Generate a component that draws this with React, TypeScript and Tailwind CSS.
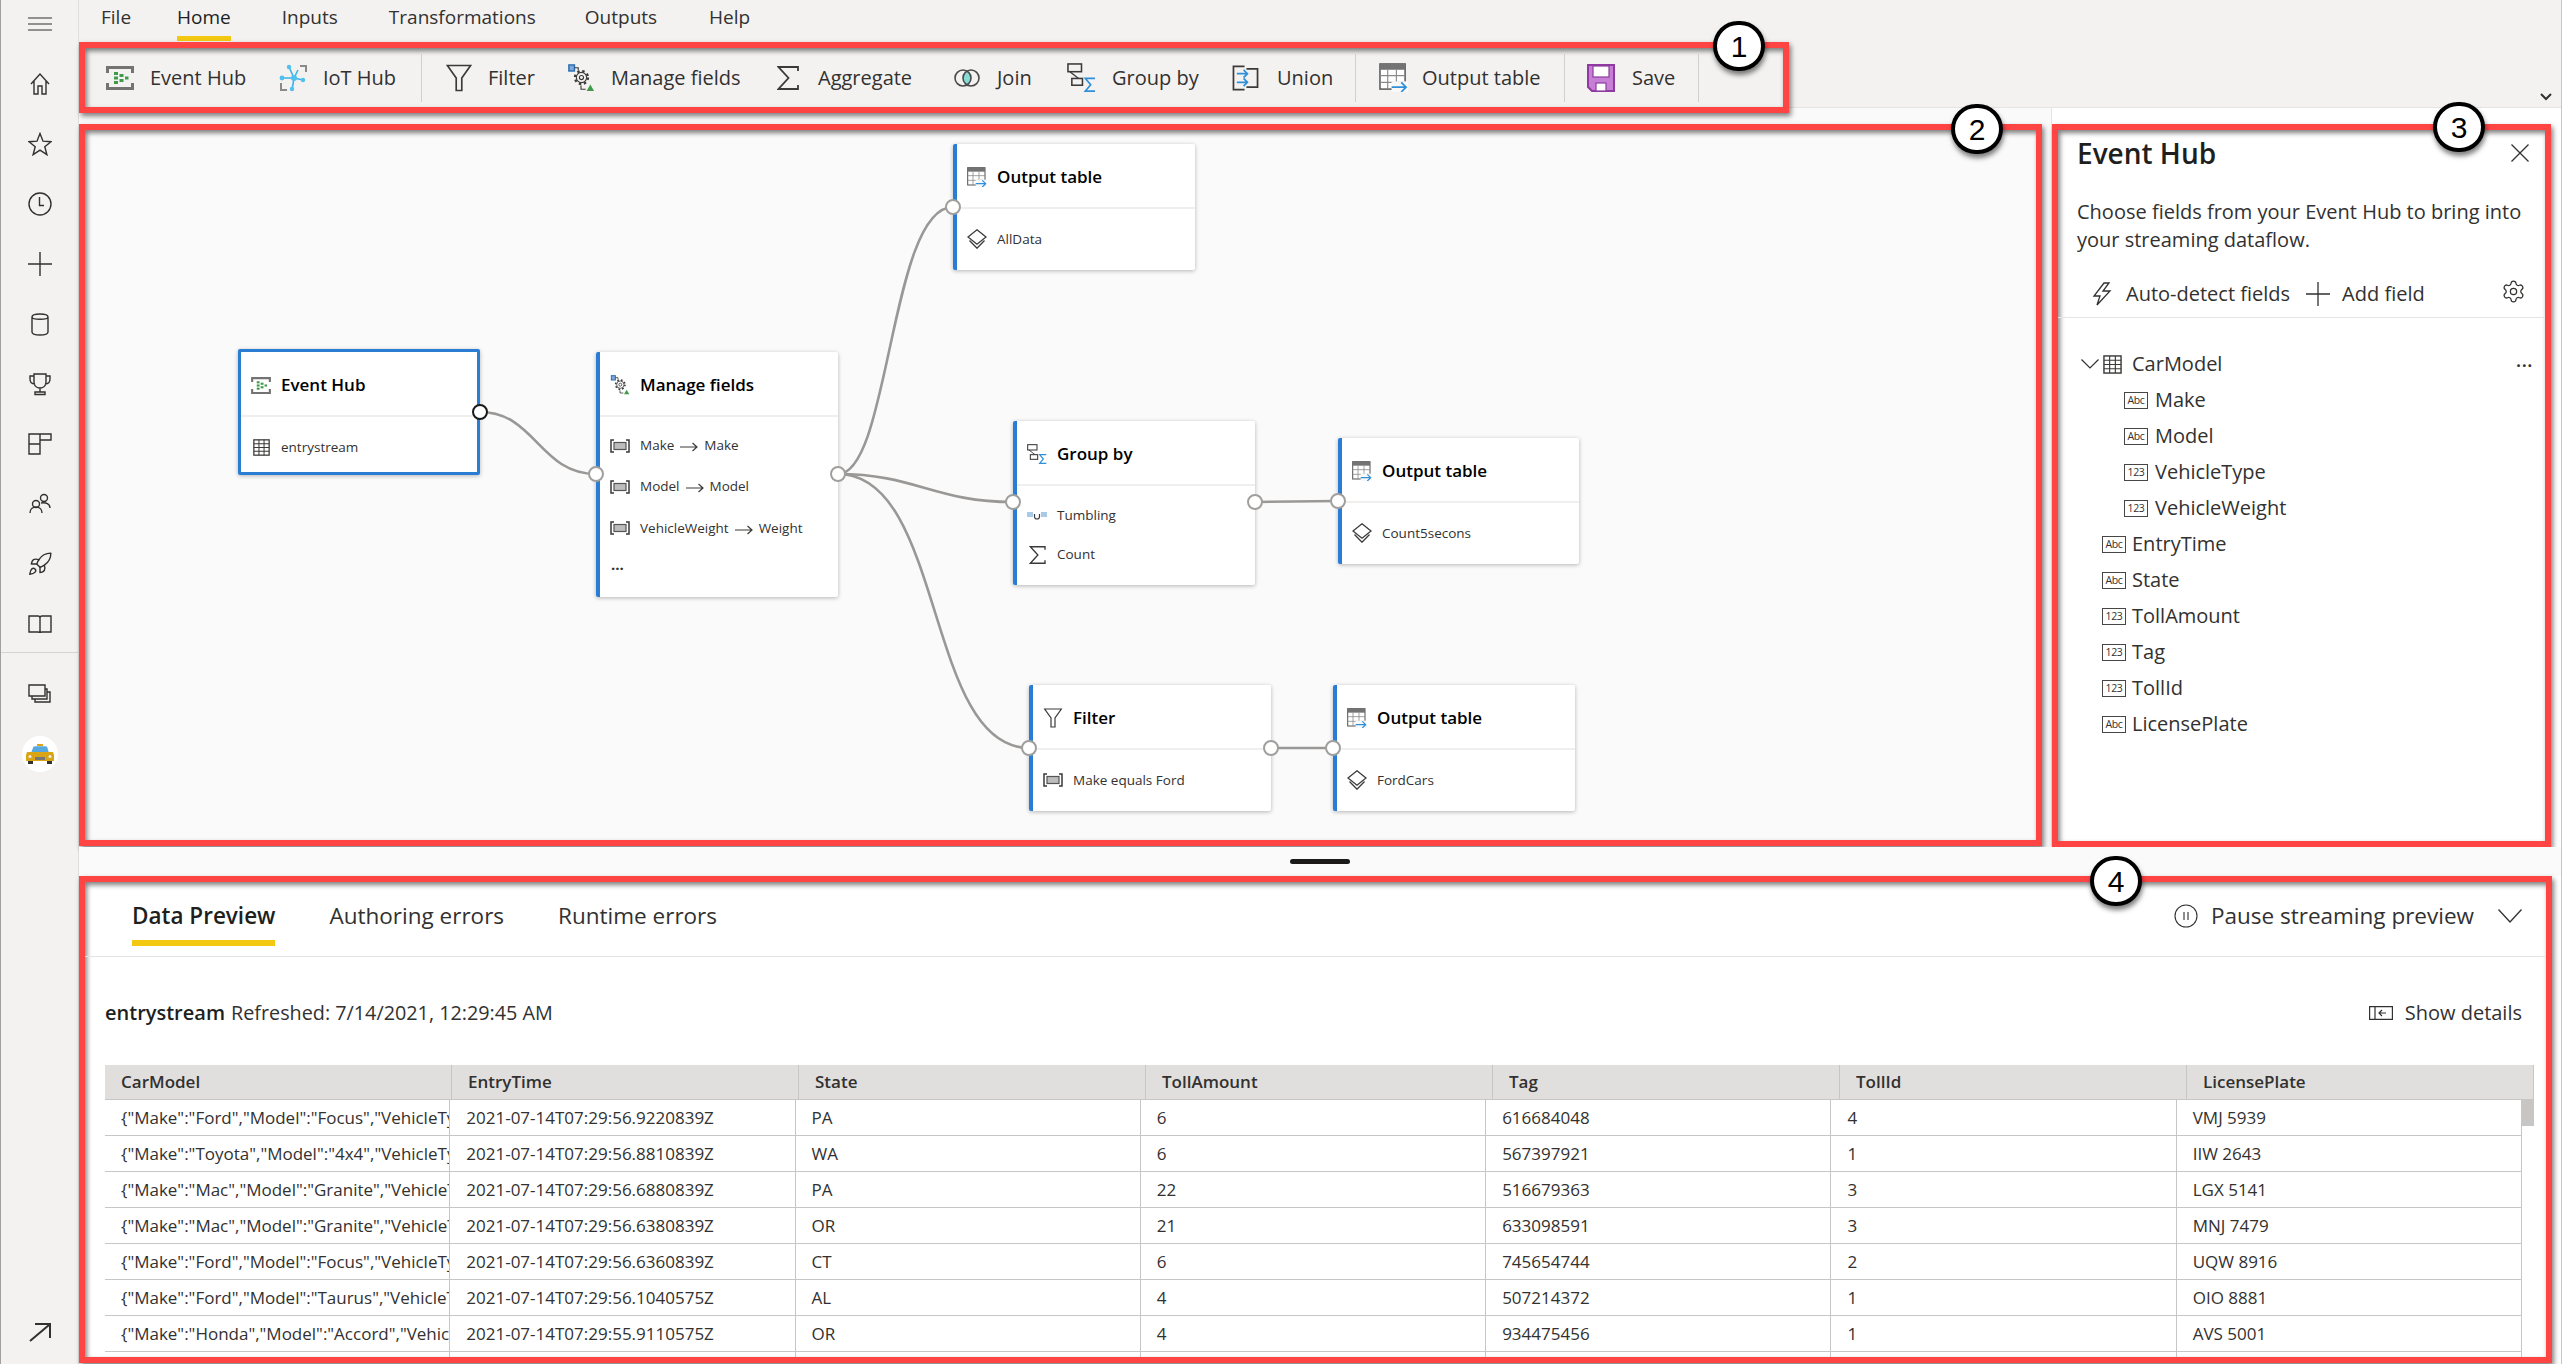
import { ReactNode } from "react"
import { Settings, Rocket } from "lucide-react"

const FONT = "font-['Open_Sans',sans-serif]"

type IconProps = { className?: string }

function EventHubIcon({ className }: IconProps) {
  return (
    <svg viewBox="0 0 28 24" className={className} fill="none">
      <path d="M1.5 7V1.5h25V7M1.5 17v5.5h25V17" stroke="#737373" strokeWidth="3" />
      <g fill="#3f9a4a">
        <rect x="8" y="6" width="4" height="3" />
        <rect x="8" y="10.5" width="4" height="3" />
        <rect x="8" y="15" width="4" height="3" />
        <rect x="13.5" y="8" width="4" height="3" />
        <rect x="13.5" y="13" width="4" height="3" />
        <rect x="19" y="10.5" width="3.5" height="3" />
      </g>
    </svg>
  )
}

function IotHubIcon({ className }: IconProps) {
  return (
    <svg viewBox="0 0 28 28" className={className} fill="none">
      <path d="M2 19v7h6M21 2h6v6" stroke="#8a8a8a" strokeWidth="2" />
      <path d="M10 3l5 11-11 0M15 14l-2 12M15 14l9 2M15 14l4-8" stroke="#3fb2e6" strokeWidth="1.6" />
      <g fill="#4fc1ee">
        <circle cx="15" cy="14" r="3" />
        <circle cx="10" cy="3" r="2.2" />
        <circle cx="3" cy="14" r="2.4" />
        <circle cx="13" cy="25" r="2.2" />
        <circle cx="24" cy="16" r="2.2" />
      </g>
    </svg>
  )
}

function FilterIcon({ className }: IconProps) {
  return (
    <svg viewBox="0 0 28 30" className={className} fill="none">
      <path d="M1.5 1.5h25L17 15v13.5h-6V15z" stroke="#3b3a39" strokeWidth="1.8" />
    </svg>
  )
}

function ManageIcon({ className }: IconProps) {
  return (
    <svg viewBox="0 0 28 30" className={className} fill="none">
      <rect x="1" y="1" width="6" height="6.5" fill="#7fa8d8" stroke="#2b6cb0" strokeWidth="1.5" />
      <circle cx="14.5" cy="14.5" r="7" stroke="#3b3a39" strokeWidth="2.4" strokeDasharray="2.6 2.9" />
      <circle cx="14.5" cy="14.5" r="5.5" stroke="#3b3a39" strokeWidth="1.2" />
      <circle cx="14.5" cy="14.5" r="2.2" stroke="#3b3a39" strokeWidth="1.2" />
      <path d="M7 4h4v3M14 23v4h5" stroke="#3b3a39" strokeWidth="1.2" />
      <path d="M20 29l4-7 4 7z" fill="#3f9a4a" />
    </svg>
  )
}

function SigmaIcon({ className }: IconProps) {
  return (
    <svg viewBox="0 0 22 24" className={className} fill="none">
      <path d="M21 5V1H1.5l10 11-10 11H21v-4" stroke="#3b3a39" strokeWidth="1.8" />
    </svg>
  )
}

function JoinIcon({ className }: IconProps) {
  return (
    <svg viewBox="0 0 26 18" className={className} fill="none">
      <path d="M13 2.2a8 8 0 0 1 0 13.6 8 8 0 0 1 0-13.6z" fill="#86dbd3" />
      <circle cx="9" cy="9" r="8" stroke="#4a4a4a" strokeWidth="1.6" />
      <circle cx="17" cy="9" r="8" stroke="#4a4a4a" strokeWidth="1.6" />
    </svg>
  )
}

function GroupByIcon({ className }: IconProps) {
  return (
    <svg viewBox="0 0 30 30" className={className} fill="none">
      <rect x="1" y="1" width="14" height="8" stroke="#3b3a39" strokeWidth="1.6" />
      <rect x="5" y="16" width="11" height="7" stroke="#3b3a39" strokeWidth="1.6" />
      <path d="M3 9l9 7" stroke="#3b3a39" strokeWidth="1.4" />
      <path d="M29 16H19l5.5 6.5L19 29h10" stroke="#2f8fd8" strokeWidth="1.8" />
    </svg>
  )
}

function UnionIcon({ className }: IconProps) {
  return (
    <svg viewBox="0 0 28 27" className={className} fill="none">
      <path d="M13 1.500H1.500v24H13M15 4h11.500v19H15" stroke="#3b3a39" strokeWidth="1.8" />
      <path d="M5 9h11M12 5l4 4-4 4M5 18h11M12 14l4 4-4 4" stroke="#2f8fd8" strokeWidth="1.8" />
    </svg>
  )
}

function OutputTableIcon({ className }: IconProps) {
  return (
    <svg viewBox="0 0 30 30" className={className} fill="none">
      <rect x="1" y="1" width="26" height="26" fill="#fff" stroke="#5c5c5c" strokeWidth="1.6" />
      <rect x="1" y="1" width="26" height="6" fill="#737373" />
      <path d="M1 13h26M1 20h26M9 7v20M18 7v20" stroke="#8a8a8a" strokeWidth="1.2" />
      <rect x="13" y="19" width="17" height="11" fill="#f8f8f8" />
      <path d="M13 25h15M23 20l5 5-5 5" stroke="#2f8fd8" strokeWidth="1.8" />
    </svg>
  )
}

function SaveIcon({ className }: IconProps) {
  return (
    <svg viewBox="0 0 28 28" className={className}>
      <path d="M1 1h26v26H5l-4-4z" fill="#c77fd6" stroke="#8e3aa0" strokeWidth="2" />
      <rect x="6" y="2" width="16" height="11" fill="#fff" stroke="#8e3aa0" strokeWidth="1.2" />
      <rect x="9" y="19" width="10" height="8" fill="#fff" stroke="#8e3aa0" strokeWidth="1.2" />
    </svg>
  )
}

function LayersIcon({ className }: IconProps) {
  return (
    <svg viewBox="0 0 20 20" className={className} fill="none">
      <path d="M10 .8l9 7.200-9 7.200-9-7.200z" stroke="#3b3a39" strokeWidth="1.3" />
      <path d="M2.500 11.500L10 19.200l7.500-7.700" stroke="#3b3a39" strokeWidth="1.3" />
    </svg>
  )
}

function GridIcon({ className }: IconProps) {
  return (
    <svg viewBox="0 0 20 20" className={className} fill="none">
      <rect x="1" y="1" width="18" height="18" stroke="#3b3a39" strokeWidth="1.5" />
      <path d="M1 5.500h18M1 10h18M1 14.500h18M7 1v18M13 1v18" stroke="#3b3a39" strokeWidth="1.2" />
    </svg>
  )
}

function RenameIcon({ className }: IconProps) {
  return (
    <svg viewBox="0 0 20 14" className={className} fill="none">
      <path d="M4 1H1v12h3M16 1h3v12h-3" stroke="#3b3a39" strokeWidth="1.5" />
      <rect x="4" y="3.500" width="12" height="7" fill="#bdbdbd" stroke="#555" strokeWidth="1.2" />
    </svg>
  )
}

function TumblingIcon({ className }: IconProps) {
  return (
    <svg viewBox="0 0 20 10" className={className} fill="none">
      <rect x="0" y="1" width="6" height="5" fill="#a9c9e8" />
      <rect x="14" y="1" width="6" height="5" fill="#a9c9e8" />
      <path d="M7.500 3v2.500a2.500 2.500 0 0 0 5 0V3" stroke="#3b3a39" strokeWidth="1.2" />
    </svg>
  )
}

function LongArrow() {
  return (
    <svg viewBox="0 0 18 10" className="mt-[3px] h-[10px] w-[18px]" fill="none">
      <path d="M0 5h17M12.500 1L17 5l-4.500 4" stroke="#3b3a39" strokeWidth="1.2" />
    </svg>
  )
}

function RailSvg({ children, className }: { children: ReactNode; className?: string }) {
  return (
    <svg viewBox="0 0 24 24" className={className ?? "h-[24px] w-[24px]"} fill="none" stroke="#323130" strokeWidth="1.4">
      {children}
    </svg>
  )
}

function TaxiIcon() {
  return (
    <svg viewBox="0 0 36 36" className="h-[36px] w-[36px]">
      <ellipse cx="18" cy="18" rx="18" ry="18" fill="#fff" />
      <rect x="6" y="24" width="5" height="4" fill="#333" />
      <rect x="25" y="24" width="5" height="4" fill="#333" />
      <rect x="15" y="8" width="6" height="2" fill="#d9a514" />
      <path d="M9 17l2.500-6.500c.3-.5 13-.5 13.500 0L27 17z" fill="#58a8e0" />
      <path d="M5 16h26l1 3v6H4v-6z" fill="#d9a514" />
      <rect x="13" y="21" width="10" height="3" fill="#777" />
      <circle cx="8" cy="20.500" r="1.500" fill="#eee" />
      <circle cx="28" cy="20.500" r="1.500" fill="#eee" />
    </svg>
  )
}

const railIcons: ReactNode[] = [
  <RailSvg key="home"><path d="M3 12L12 2l9 10M6 9v13h4v-8h4v8h4V9" /></RailSvg>,
  <RailSvg key="star"><path d="M12 1.500l3 7.700 8 .5-6.200 5 2.100 8-6.900-4.500-6.900 4.500 2.100-8-6.200-5 8-.5z" /></RailSvg>,
  <RailSvg key="clock"><circle cx="12" cy="12" r="11" /><path d="M11.500 5v8.500H16" /></RailSvg>,
  <RailSvg key="plus"><path d="M12 0v24M0 12h24" /></RailSvg>,
  <RailSvg key="cyl"><path d="M4 5c0-4 16-4 16 0v15c0 4-16 4-16 0zM4 5c0 3 16 3 16 0" /></RailSvg>,
  <RailSvg key="trophy"><path d="M6 2h12v8c0 8-12 8-12 0zM6 4H2v3c0 3 2 5 5 5M18 4h4v3c0 3-2 5-5 5M12 16v4M7 22.500h10v-2.500H7z" /></RailSvg>,
  <RailSvg key="apps"><path d="M1 2h11v10H1zM12 2h11v6H12zM1 12h11v10H1z" /></RailSvg>,
  <RailSvg key="people"><circle cx="8" cy="12" r="3.500" /><circle cx="16" cy="6" r="3.500" /><path d="M2 21c0-4 3-6 6-6s6 2 6 6M13 11c5-1 9 1 9 5" /></RailSvg>,
  <Rocket key="rocket" className="h-[26px] w-[26px] text-[#323130]" strokeWidth={1.3} />,
  <RailSvg key="book"><path d="M1 4h9c1 0 2 1 2 2 0-1 1-2 2-2h9v16h-9c-1 0-2 .5-2 1 0-.5-1-1-2-1H1zM12 6v15" /></RailSvg>,
]

function Rail() {
  return (
    <div className="flex h-full w-[79px] shrink-0 flex-col items-center border-l border-r border-l-[#a0a0a0] border-r-[#e1dfdd] bg-[#f3f2f1]">
      <div className="flex h-[54px] items-start pt-[17px]">
        <svg viewBox="0 0 24 14" className="h-[14px] w-[24px]" fill="none" stroke="#323130" strokeWidth="1.200">
          <path d="M0 1h24M0 7h24M0 13h24" />
        </svg>
      </div>
      {railIcons.map((icon, i) => (
        <div key={i} className="flex h-[60px] w-full items-center justify-center">{icon}</div>
      ))}
      <div className="mt-[-2px] h-px w-full bg-[#d6d4d2]" />
      <div className="mt-[10px] flex h-[60px] items-center justify-center">
        <RailSvg><path d="M1 4h16v11H1zM4 15v3h15V8h-2M7 18v3h15V11h-3" /></RailSvg>
      </div>
      <div className="flex h-[61px] items-center justify-center"><TaxiIcon /></div>
      <div className="mb-[20px] mt-auto">
        <RailSvg><path d="M2 21L21 5M7 4h15v14" strokeWidth={2} /></RailSvg>
      </div>
    </div>
  )
}

function ToolItem({ icon, label, labelClass }: { icon: ReactNode; label: string; labelClass: string }) {
  return (
    <div className="flex items-center gap-[16px]">
      {icon}
      <span className={`whitespace-nowrap text-[20px] text-[#323130] ${labelClass}`}>{label}</span>
    </div>
  )
}

function Sep() {
  return <div className="mx-[24px] h-[48px] w-px shrink-0 bg-[#d2d0ce]" />
}

function Ribbon() {
  return (
    <div className="h-[108px] shrink-0 border-b border-[#e6e4e2] bg-[#f3f2f1]">
      <div className="flex h-[42px] items-start pl-[22px] pt-[3px] text-[19px] text-[#323130]">
        <span>File</span>
        <span className="ml-[46px] h-[38px] border-b-[5px] border-[#f2c811] font-medium text-[#201f1e]">Home</span>
        <span className="ml-[51px]">Inputs</span>
        <span className="ml-[51px]">Transformations</span>
        <span className="ml-[49px]">Outputs</span>
        <span className="ml-[52px]">Help</span>
      </div>
      <div className="flex h-[66px] items-start justify-between">
        <div className="relative z-10 flex h-[71px] w-[1710px] shrink-0 items-center border-[6px] border-[#ff4444] bg-[#f3f2f1] pl-[21px] shadow-[2px_3px_5px_rgba(0,0,0,0.5),inset_2px_3px_5px_rgba(0,0,0,0.5)]">
          <div className="flex items-center gap-[34px]">
            <ToolItem icon={<EventHubIcon className="h-[24px] w-[28px]" />} label="Event Hub" labelClass="w-[95px]" />
            <ToolItem icon={<IotHubIcon className="h-[28px] w-[28px]" />} label="IoT Hub" labelClass="w-[74px]" />
          </div>
          <Sep />
          <div className="flex items-center gap-[34px]">
            <ToolItem icon={<FilterIcon className="h-[28px] w-[26px]" />} label="Filter" labelClass="w-[45px]" />
            <ToolItem icon={<ManageIcon className="h-[28px] w-[28px]" />} label="Manage fields" labelClass="w-[129px]" />
            <ToolItem icon={<SigmaIcon className="ml-[3px] mr-[3px] h-[24px] w-[22px]" />} label="Aggregate" labelClass="w-[98px]" />
            <ToolItem icon={<JoinIcon className="ml-[4px] mr-[1px] h-[18px] w-[26px]" />} label="Join" labelClass="w-[36px]" />
            <ToolItem icon={<GroupByIcon className="h-[29px] w-[29px]" />} label="Group by" labelClass="w-[86px]" />
            <ToolItem icon={<UnionIcon className="mr-[2px] h-[26px] w-[27px]" />} label="Union" labelClass="w-[54px]" />
          </div>
          <Sep />
          <ToolItem icon={<OutputTableIcon className="-ml-[1px] -mr-[2px] h-[29px] w-[29px]" />} label="Output table" labelClass="w-[118px]" />
          <Sep />
          <ToolItem icon={<SaveIcon className="-ml-[2px] mr-[1px] h-[28px] w-[28px]" />} label="Save" labelClass="w-[42px]" />
          <Sep />
        </div>
        <svg viewBox="0 0 12 8" className="mr-[9px] mt-[51px] h-[8px] w-[12px]" fill="none" stroke="#323130" strokeWidth="2">
          <path d="M1 1l5 5 5-5" />
        </svg>
      </div>
    </div>
  )
}

function Port({ pos, dark }: { pos: string; dark?: boolean }) {
  return (
    <div className={`absolute z-10 h-[16px] w-[16px] rounded-full border-[2.5px] bg-white ${dark ? "border-[#1b1a19]" : "border-[#a19f9d]"} ${pos}`} />
  )
}

function FlowNode({ pos, size, title, icon, selected, children }: { pos: string; size: string; title: string; icon: ReactNode; selected?: boolean; children: ReactNode }) {
  return (
    <div className={`absolute rounded-[2px] bg-white shadow-[0_1px_4px_rgba(0,0,0,0.28)] ${selected ? "border-[3px] border-[#2b7cd3]" : "border-l-[4px] border-[#2b7cd3]"} ${pos} ${size}`}>
      <div className="flex h-[65px] items-center gap-[10px] border-b-2 border-[#f0efee] pl-[10px] pt-[3px]">
        <div className="flex w-[20px] shrink-0 justify-center">{icon}</div>
        <span className="whitespace-nowrap text-[17px] font-semibold text-black">{title}</span>
      </div>
      {children}
    </div>
  )
}

function BodyRow({ icon, children, cls }: { icon: ReactNode; children: ReactNode; cls?: string }) {
  return (
    <div className={`flex items-center gap-[10px] pl-[10px] ${cls ?? "h-[60px]"}`}>
      <div className="flex w-[20px] shrink-0 justify-center">{icon}</div>
      <span className="flex items-center gap-[6px] whitespace-nowrap text-[13.500px] text-[#323130]">{children}</span>
    </div>
  )
}

function Canvas() {
  const rename = <RenameIcon className="h-[14px] w-[20px]" />
  const layers = <LayersIcon className="h-[20px] w-[20px]" />
  const outIcon = <OutputTableIcon className="h-[20px] w-[20px]" />
  return (
    <div className="relative h-full w-full">
      <svg className="absolute inset-0 h-full w-full" fill="none" stroke="#9a9896" strokeWidth="2.600">
        <path d="M395 282C450 282 455 344 511 344" />
        <path d="M753 344C805 344 805 77 868 77" />
        <path d="M753 344C830 344 850 372 928 372" />
        <path d="M753 344C860 344 840 618 944 618" />
        <path d="M1170 372L1253 371" />
        <path d="M1186 618H1248" />
      </svg>

      <FlowNode pos="left-[153px] top-[219px]" size="h-[126px] w-[242px]" title="Event Hub" selected icon={<EventHubIcon className="h-[17px] w-[20px]" />}>
        <BodyRow icon={<GridIcon className="h-[17px] w-[17px]" />}>entrystream</BodyRow>
      </FlowNode>

      <FlowNode pos="left-[511px] top-[222px]" size="h-[245px] w-[242px]" title="Manage fields" icon={<ManageIcon className="h-[20px] w-[20px]" />}>
        <div className="pt-[8px]">
          <BodyRow cls="h-[41px]" icon={rename}>Make <LongArrow /> Make</BodyRow>
          <BodyRow cls="h-[41px]" icon={rename}>Model <LongArrow /> Model</BodyRow>
          <BodyRow cls="h-[42px]" icon={rename}>VehicleWeight <LongArrow /> Weight</BodyRow>
          <div className="pl-[11px] text-[15px] font-bold leading-[30px] text-[#323130]">...</div>
        </div>
      </FlowNode>

      <FlowNode pos="left-[868px] top-[14px]" size="h-[126px] w-[242px]" title="Output table" icon={outIcon}>
        <BodyRow icon={layers}>AllData</BodyRow>
      </FlowNode>

      <FlowNode pos="left-[928px] top-[291px]" size="h-[164px] w-[242px]" title="Group by" icon={<GroupByIcon className="h-[20px] w-[20px]" />}>
        <div className="pt-[10px]">
          <BodyRow cls="h-[39px]" icon={<TumblingIcon className="h-[10px] w-[20px]" />}>Tumbling</BodyRow>
          <BodyRow cls="h-[39px]" icon={<SigmaIcon className="h-[18px] w-[17px]" />}>Count</BodyRow>
        </div>
      </FlowNode>

      <FlowNode pos="left-[1253px] top-[308px]" size="h-[126px] w-[241px]" title="Output table" icon={outIcon}>
        <BodyRow icon={layers}>Count5secons</BodyRow>
      </FlowNode>

      <FlowNode pos="left-[944px] top-[555px]" size="h-[126px] w-[242px]" title="Filter" icon={<FilterIcon className="h-[20px] w-[20px]" />}>
        <BodyRow icon={rename}>Make equals Ford</BodyRow>
      </FlowNode>

      <FlowNode pos="left-[1248px] top-[555px]" size="h-[126px] w-[242px]" title="Output table" icon={outIcon}>
        <BodyRow icon={layers}>FordCars</BodyRow>
      </FlowNode>

      <Port dark pos="left-[387px] top-[274px]" />
      <Port pos="left-[503px] top-[336px]" />
      <Port pos="left-[745px] top-[336px]" />
      <Port pos="left-[860px] top-[69px]" />
      <Port pos="left-[920px] top-[364px]" />
      <Port pos="left-[1162px] top-[364px]" />
      <Port pos="left-[1245px] top-[363px]" />
      <Port pos="left-[936px] top-[610px]" />
      <Port pos="left-[1178px] top-[610px]" />
      <Port pos="left-[1240px] top-[610px]" />
    </div>
  )
}

function TypeBadge({ label }: { label: string }) {
  return (
    <span className="flex h-[17px] w-[24px] shrink-0 items-center justify-center border-[1.500px] border-[#484644] text-[10.500px] font-medium leading-none tracking-[-0.4px] text-[#323130]">
      {label}
    </span>
  )
}

const nestedFields = [
  { type: "Abc", name: "Make" },
  { type: "Abc", name: "Model" },
  { type: "123", name: "VehicleType" },
  { type: "123", name: "VehicleWeight" },
]

const topFields = [
  { type: "Abc", name: "EntryTime" },
  { type: "Abc", name: "State" },
  { type: "123", name: "TollAmount" },
  { type: "123", name: "Tag" },
  { type: "123", name: "TollId" },
  { type: "Abc", name: "LicensePlate" },
]

function FieldsPanel() {
  return (
    <div className="text-[#323130]">
      <div className="flex h-[46px] items-center justify-between pl-[19px] pr-[16px]">
        <span className="text-[28px] font-semibold text-[#201f1e]">Event Hub</span>
        <svg viewBox="0 0 18 18" className="h-[18px] w-[18px]" fill="none" stroke="#323130" strokeWidth="1.300">
          <path d="M.5.5l17 17M17.500.5l-17 17" />
        </svg>
      </div>
      <p className="mt-[22px] w-[470px] pl-[19px] text-[20px] leading-[28px]">
        Choose fields from your Event Hub to bring into your streaming dataflow.
      </p>
      <div className="flex h-[64px] items-center border-b border-[#e6e4e2] pl-[34px] pr-[19px] pt-[16px] text-[20px]">
        <svg viewBox="0 0 20 24" className="h-[24px] w-[20px]" fill="none" stroke="#323130" strokeWidth="1.300">
          <path d="M12 1L2 14h6l-3 9L18 9h-7l6-8z" />
        </svg>
        <span className="ml-[14px]">Auto-detect fields</span>
        <svg viewBox="0 0 24 24" className="ml-[16px] h-[24px] w-[24px]" fill="none" stroke="#323130" strokeWidth="1.300">
          <path d="M12 0v24M0 12h24" />
        </svg>
        <span className="ml-[12px]">Add field</span>
        <Settings className="ml-auto h-[25px] w-[25px] -translate-y-[2px]" strokeWidth={1.2} />
      </div>
      <div className="mt-[28px] text-[20px]">
        <div className="flex h-[36px] items-center pl-[23px] pr-[12px]">
          <svg viewBox="0 0 18 10" className="h-[10px] w-[18px]" fill="none" stroke="#323130" strokeWidth="1.200">
            <path d="M.5.5L9 9 17.500.5" />
          </svg>
          <GridIcon className="ml-[4px] h-[19px] w-[19px]" />
          <span className="ml-[10px]">CarModel</span>
          <span className="ml-auto -translate-y-[3px] text-[16px] font-bold leading-none tracking-[1px]">...</span>
        </div>
        {nestedFields.map((f) => (
          <div key={f.name} className="flex h-[36px] items-center gap-[7px] pl-[66px]">
            <TypeBadge label={f.type} />
            <span>{f.name}</span>
          </div>
        ))}
        {topFields.map((f) => (
          <div key={f.name} className="flex h-[36px] items-center gap-[6px] pl-[44px]">
            <TypeBadge label={f.type} />
            <span>{f.name}</span>
          </div>
        ))}
      </div>
    </div>
  )
}

const columns = ["CarModel", "EntryTime", "State", "TollAmount", "Tag", "TollId", "LicensePlate"]

const rows = [
  ['{"Make":"Ford","Model":"Focus","VehicleType":1,"VehicleWeight":"0"}', "2021-07-14T07:29:56.9220839Z", "PA", "6", "616684048", "4", "VMJ 5939"],
  ['{"Make":"Toyota","Model":"4x4","VehicleType":1,"VehicleWeight":"0"}', "2021-07-14T07:29:56.8810839Z", "WA", "6", "567397921", "1", "IIW 2643"],
  ['{"Make":"Mac","Model":"Granite","VehicleType":2,"VehicleWeight":"1"}', "2021-07-14T07:29:56.6880839Z", "PA", "22", "516679363", "3", "LGX 5141"],
  ['{"Make":"Mac","Model":"Granite","VehicleType":2,"VehicleWeight":"1"}', "2021-07-14T07:29:56.6380839Z", "OR", "21", "633098591", "3", "MNJ 7479"],
  ['{"Make":"Ford","Model":"Focus","VehicleType":1,"VehicleWeight":"0"}', "2021-07-14T07:29:56.6360839Z", "CT", "6", "745654744", "2", "UQW 8916"],
  ['{"Make":"Ford","Model":"Taurus","VehicleType":1,"VehicleWeight":"0"}', "2021-07-14T07:29:56.1040575Z", "AL", "4", "507214372", "1", "OIO 8881"],
  ['{"Make":"Honda","Model":"Accord","VehicleType":1,"VehicleWeight":"0"}', "2021-07-14T07:29:55.9110575Z", "OR", "4", "934475456", "1", "AVS 5001"],
  ["", "", "", "", "", "", ""],
]

function PreviewPanel() {
  return (
    <div className="text-[#323130]">
      <div className="flex h-[75px] items-start justify-between border-b border-[#e6e4e2] pl-[47px] pr-[24px]">
        <div className="flex gap-[54px] text-[22.500px]">
          <span className="h-[64px] border-b-[6px] border-[#f2c811] pt-[17px] font-semibold text-[#201f1e]">Data Preview</span>
          <span className="pt-[17px]">Authoring errors</span>
          <span className="pt-[17px]">Runtime errors</span>
        </div>
        <div className="flex items-center pt-[17px] text-[22.500px]">
          <svg viewBox="0 0 24 24" className="h-[24px] w-[24px]" fill="none" stroke="#323130" strokeWidth="1.100">
            <circle cx="12" cy="12" r="11" />
            <path d="M10 8v8M14 8v8" />
          </svg>
          <span className="ml-[13px]">Pause streaming preview</span>
          <svg viewBox="0 0 24 14" className="ml-[24px] h-[14px] w-[24px]" fill="none" stroke="#323130" strokeWidth="1.300">
            <path d="M.5.5L12 13 23.500.5" />
          </svg>
        </div>
      </div>
      <div className="flex h-[108px] items-center justify-between pl-[20px] pr-[24px] pt-[4px] text-[20px]">
        <div>
          <span className="font-semibold text-[#201f1e]">entrystream</span>
          <span className="ml-[6px] text-[19.800px]">Refreshed: 7/14/2021, 12:29:45 AM</span>
        </div>
        <div className="flex items-center gap-[12px]">
          <svg viewBox="0 0 24 14" className="h-[14px] w-[24px]" fill="none" stroke="#323130" strokeWidth="1.200">
            <path d="M.6.6h22.800v12.800H.6zM6 .6v12.800M17 7H10M13 4L10 7l3 3" />
          </svg>
          <span>Show details</span>
        </div>
      </div>
      <div className="ml-[20px] w-[2429px] text-[17px]">
        <div className="grid h-[35px] grid-cols-7 border-b border-[#c8c6c4] bg-[#e1dfdd] font-semibold text-[#323130]">
          {columns.map((c) => (
            <div key={c} className="flex items-center border-r border-[#c8c6c4] pl-[16px]">{c}</div>
          ))}
        </div>
        <div className="flex">
          <div className="grid flex-1 grid-cols-7">
            {rows.map((row, r) =>
              row.map((cell, c) => (
                <div
                  key={`${r}-${c}`}
                  className="flex h-[36px] items-center overflow-hidden whitespace-nowrap border-b border-r border-[#c8c6c4] pl-[16px]"
                >
                  {cell}
                </div>
              ))
            )}
          </div>
          <div className="w-[12px] shrink-0">
            <div className="h-[26px] w-full bg-[#c8c6c4]" />
          </div>
        </div>
      </div>
    </div>
  )
}

const boxCls =
  "border-[6px] border-[#ff4444] overflow-hidden shadow-[2px_3px_5px_rgba(0,0,0,0.5),inset_2px_3px_5px_rgba(0,0,0,0.5)]"

function Callout({ n, pos }: { n: number; pos: string }) {
  return (
    <div className={`absolute z-50 flex h-[50px] w-[52px] items-center justify-center rounded-full border-[4px] border-black bg-white font-['Liberation_Sans',sans-serif] text-[30px] text-black shadow-[1px_4px_5px_rgba(0,0,0,0.5)] ${pos}`}>
      {n}
    </div>
  )
}

export default function App() {
  return (
    <div className={`relative flex h-[1364px] w-[2562px] overflow-hidden bg-white ${FONT}`}>
      <Rail />
      <div className="flex min-w-0 flex-1 flex-col border-r border-[#c8c6c4]">
        <Ribbon />
        <div className="flex h-[739px] shrink-0 bg-[#fafafa]">
          <div className="h-full w-[1963px] shrink-0 pt-[16px]">
            <div className={`h-[722px] w-full bg-[#fafafa] ${boxCls}`}>
              <Canvas />
            </div>
          </div>
          <div className="ml-[9px] h-full flex-1 border-l border-[#e6e4e2] bg-white pt-[16px]">
            <div className={`h-[723px] w-[499px] bg-white ${boxCls}`}>
              <FieldsPanel />
            </div>
          </div>
        </div>
        <div className="flex h-[29px] shrink-0 items-center justify-center bg-[#fafafa]">
          <div className="h-[5px] w-[60px] rounded-full bg-[#1b1a19]" />
        </div>
        <div className={`h-[487px] w-[2473px] shrink-0 bg-white ${boxCls}`}>
          <PreviewPanel />
        </div>
      </div>
      <Callout n={1} pos="left-[1713px] top-[21px]" />
      <Callout n={2} pos="left-[1951px] top-[104px]" />
      <Callout n={3} pos="left-[2433px] top-[102px]" />
      <Callout n={4} pos="left-[2090px] top-[856px]" />
    </div>
  )
}
